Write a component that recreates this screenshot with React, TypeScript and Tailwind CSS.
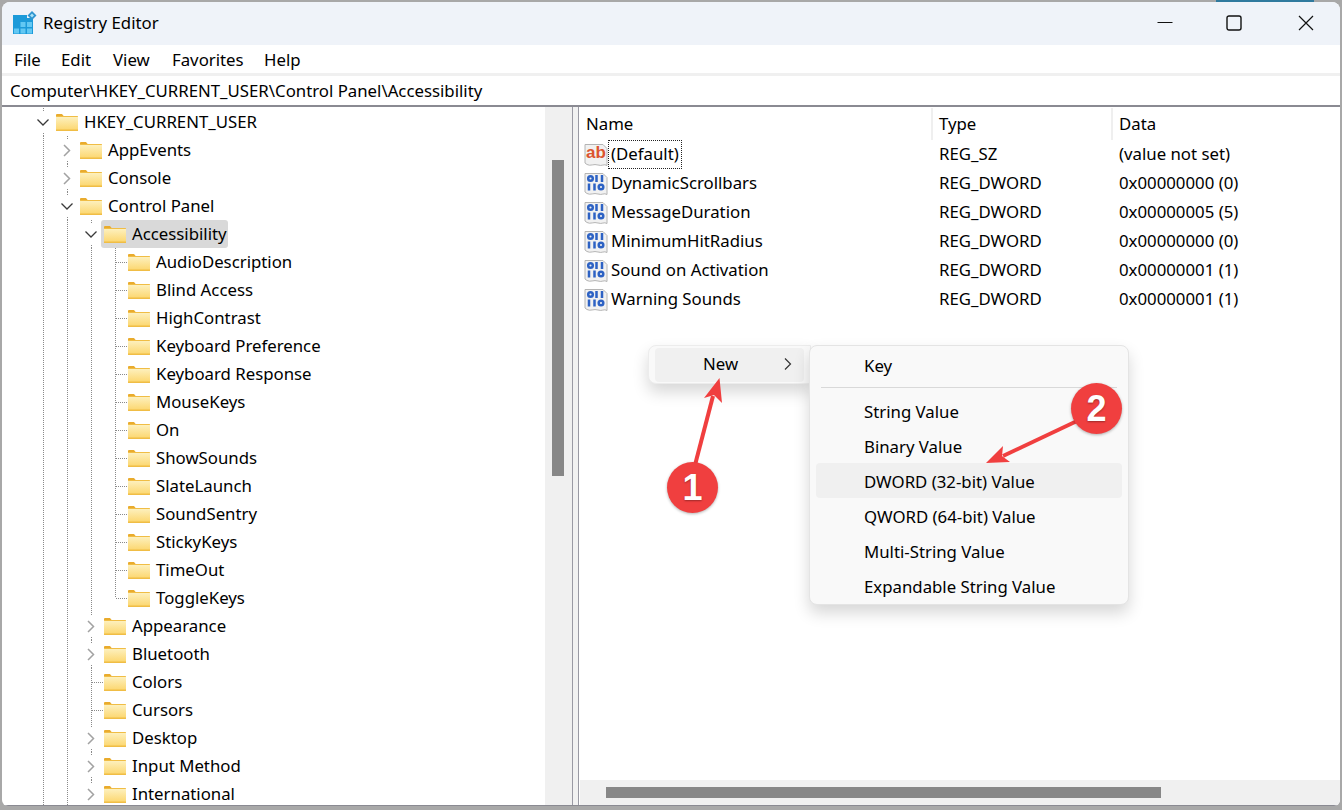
const font = "font-['Noto_Sans','Open_Sans',sans-serif]";

type Guide = "line" | "tee" | "last" | "open" | "closed";

const tree: { label: string; depth: number; kind: Guide; selected?: boolean }[] = [
  { label: "HKEY_CURRENT_USER", depth: 0, kind: "open" },
  { label: "AppEvents", depth: 1, kind: "closed" },
  { label: "Console", depth: 1, kind: "closed" },
  { label: "Control Panel", depth: 1, kind: "open" },
  { label: "Accessibility", depth: 2, kind: "open", selected: true },
  { label: "AudioDescription", depth: 3, kind: "tee" },
  { label: "Blind Access", depth: 3, kind: "tee" },
  { label: "HighContrast", depth: 3, kind: "tee" },
  { label: "Keyboard Preference", depth: 3, kind: "tee" },
  { label: "Keyboard Response", depth: 3, kind: "tee" },
  { label: "MouseKeys", depth: 3, kind: "tee" },
  { label: "On", depth: 3, kind: "tee" },
  { label: "ShowSounds", depth: 3, kind: "tee" },
  { label: "SlateLaunch", depth: 3, kind: "tee" },
  { label: "SoundSentry", depth: 3, kind: "tee" },
  { label: "StickyKeys", depth: 3, kind: "tee" },
  { label: "TimeOut", depth: 3, kind: "tee" },
  { label: "ToggleKeys", depth: 3, kind: "last" },
  { label: "Appearance", depth: 2, kind: "closed" },
  { label: "Bluetooth", depth: 2, kind: "closed" },
  { label: "Colors", depth: 2, kind: "tee" },
  { label: "Cursors", depth: 2, kind: "tee" },
  { label: "Desktop", depth: 2, kind: "closed" },
  { label: "Input Method", depth: 2, kind: "closed" },
  { label: "International", depth: 2, kind: "closed" },
];

const values = [
  { name: "(Default)", type: "REG_SZ", data: "(value not set)", string: true },
  { name: "DynamicScrollbars", type: "REG_DWORD", data: "0x00000000 (0)" },
  { name: "MessageDuration", type: "REG_DWORD", data: "0x00000005 (5)" },
  { name: "MinimumHitRadius", type: "REG_DWORD", data: "0x00000000 (0)" },
  { name: "Sound on Activation", type: "REG_DWORD", data: "0x00000001 (1)" },
  { name: "Warning Sounds", type: "REG_DWORD", data: "0x00000001 (1)" },
];

const submenu = ["String Value", "Binary Value", "DWORD (32-bit) Value", "QWORD (64-bit) Value", "Multi-String Value", "Expandable String Value"];

function GuideCell({ kind }: { kind: Guide }) {
  const dots = { stroke: "#8a8a8a", strokeDasharray: "1 1", shapeRendering: "crispEdges" as const };
  return (
    <svg width="24" height="28" viewBox="0 0 24 28" fill="none" className="shrink-0">
      {kind === "line" && <path d="M12.5 0V28" {...dots} />}
      {kind === "tee" && <path d="M12.5 0V28M13 14.5H24" {...dots} />}
      {kind === "last" && <path d="M12.5 0V14M13 14.5H24" {...dots} />}
      {(kind === "open" || kind === "closed") && <path d="M12.5 0V3M12.5 25V28" {...dots} />}
      {kind === "open" && <path d="M6.5 11.5L12 17L17.5 11.5" stroke="#3a3a3a" strokeWidth="1.3" />}
      {kind === "closed" && <path d="M9 9L14.5 14.5L9 20" stroke="#a2a2a2" strokeWidth="1.5" />}
    </svg>
  );
}

function Folder() {
  return (
    <svg width="22" height="17" viewBox="0 0 22 17" className="shrink-0">
      <path d="M0 1a1 1 0 0 1 1-1h5l2 2.5H0z" fill="#e9ab2d" />
      <rect x="0" y="2" width="22" height="15" rx="0.5" fill="#f0bd45" />
      <rect x="0" y="3" width="22" height="12.5" fill="url(#folderFill)" />
      <defs>
        <linearGradient id="folderFill" x1="0" y1="0" x2="0" y2="1">
          <stop offset="0" stopColor="#fdf0bd" />
          <stop offset="1" stopColor="#fcd873" />
        </linearGradient>
      </defs>
    </svg>
  );
}

function TreeRow({ label, depth, kind, selected }: (typeof tree)[number]) {
  return (
    <div className="flex h-7 shrink-0 items-center">
      {Array.from({ length: depth }).map((_, i) => (
        <GuideCell key={i} kind="line" />
      ))}
      <GuideCell kind={kind} />
      <div className={`ml-[-2px] flex h-7 items-center gap-[6px] rounded-[3px] pl-[3px] pr-[1px] ${selected ? "bg-[#d9d9d9]" : ""}`}>
        <Folder />
        <span className="whitespace-nowrap">{label}</span>
      </div>
    </div>
  );
}

function RegIcon({ string }: { string?: boolean }) {
  return (
    <svg width="24" height="24" viewBox="0 0 24 24" className="shrink-0">
      <path d="M1 1.5H19L23 5.5V22.5C20 20.5 18 23.5 14 22C10 20.5 6 23.5 3 21.5L1 20Z" fill="#f1f1f1" stroke="#b4b4b4" />
      {string ? (
        <text x="2" y="15" fontSize="17" fontWeight="700" fill="#dc5530" fontFamily="Liberation Sans, sans-serif">ab</text>
      ) : (
        <g fill="none" stroke="#2d62c4" strokeWidth="2.5">
          <circle cx="6.5" cy="6.5" r="2.3" />
          <path d="M12.5 3V10M18 3V10M5 11.5V18.5M10.5 11.5V18.5" />
          <circle cx="17" cy="15" r="2.3" />
        </g>
      )}
    </svg>
  );
}

export default function App() {
  return (
    <div className={`relative h-[810px] w-[1342px] overflow-hidden bg-[#a8a8a8] text-[16.8px] leading-none text-black ${font}`}>
      <div className="ml-[1216px] h-[2px] w-[98px] bg-[#2f7a9e]" />
      <div className="ml-[2px] flex h-[804px] w-[1338px] flex-col overflow-hidden rounded-lg rounded-b-[6px] bg-white">
        {/* title bar */}
        <div className="flex h-[43px] shrink-0 items-center bg-[#eff3f9] pl-[11px]">
          <svg width="24" height="26" viewBox="0 0 24 26" className="mb-[2px] shrink-0">
            <path d="M0 5H14V8H20V24H0Z" fill="#1c9ad9" />
            <g fill="#63c8f3">
              <rect x="7.5" y="12" width="5" height="5" />
              <rect x="14" y="12" width="5" height="5" />
              <rect x="1" y="18.5" width="5" height="5" />
              <rect x="7.5" y="18.5" width="5" height="5" />
              <rect x="14" y="18.5" width="5" height="5" />
            </g>
            <path d="M19 1L23.5 5.5L19 10L14.5 5.5Z" fill="#2f94cf" />
            <path d="M19 3.5L21 5.5L19 7.5L17 5.5Z" fill="#a9e3f8" />
          </svg>
          <span className="ml-[6px]">Registry Editor</span>
          <div className="ml-auto flex items-center pb-[2px]">
            <svg width="16" height="16" viewBox="0 0 16 16" className="mr-[53px]"><path d="M0.5 7.5H15.5" stroke="#111" strokeWidth="1.1" /></svg>
            <svg width="16" height="16" viewBox="0 0 16 16" className="mr-[56px]"><rect x="1" y="1" width="14" height="14" rx="2" fill="none" stroke="#111" strokeWidth="1.4" /></svg>
            <svg width="16" height="16" viewBox="0 0 16 16" className="mr-[26px]"><path d="M1 1L15 15M15 1L1 15" stroke="#111" strokeWidth="1.2" /></svg>
          </div>
        </div>

        {/* menu bar */}
        <div className="flex h-7 shrink-0 items-center bg-white pt-[2px]">
          <span className="ml-[12px] w-[47px]">File</span>
          <span className="w-[52px]">Edit</span>
          <span className="w-[59px]">View</span>
          <span className="w-[92px]">Favorites</span>
          <span>Help</span>
        </div>

        {/* address bar */}
        <div className="flex h-[34px] shrink-0 items-center border-t-[3px] border-b-2 border-t-[#f0f0f0] border-b-[#8a8a92] bg-white pl-[8px] pt-[2px]">
          Computer\HKEY_CURRENT_USER\Control Panel\Accessibility
        </div>

        <div className="flex min-h-0 flex-1 border-b border-[#8a8a92]">
          {/* key tree */}
          <div className="flex w-[543px] shrink-0 flex-col overflow-hidden pl-[29px] pt-px">
            {tree.map((row) => (
              <TreeRow key={row.label} {...row} />
            ))}
          </div>
          <div className="flex w-[27px] shrink-0 justify-center bg-[#f0f0f0] pt-[53px] pr-px">
            <div className="h-[316px] w-[12px] bg-[#878787]" />
          </div>
          <div className="w-[7px] shrink-0 border-x border-[#9a9aa4] bg-[#f2f2f2]" />

          {/* value list */}
          <div className="flex min-w-0 flex-1 flex-col">
            <div className="grid h-[33px] shrink-0 grid-cols-[354px_180px_1fr] items-center pt-px">
              <div className="flex h-full items-center border-r-2 border-[#efefef] pl-[7px]">Name</div>
              <div className="flex h-full items-center border-r-2 border-[#efefef] pl-[6px]">Type</div>
              <div className="pl-[6px]">Data</div>
            </div>
            {values.map((v, i) => (
              <div key={v.name} className="grid h-[29px] shrink-0 grid-cols-[354px_180px_1fr] items-center">
                <div className="flex items-center pl-[5px]">
                  <RegIcon string={v.string} />
                  <span className={`flex h-[29px] items-center px-[2px] ${i === 0 ? "border border-dotted border-[#222]" : "border border-transparent"}`}>{v.name}</span>
                </div>
                <div className="pl-[6px]">{v.type}</div>
                <div className="pl-[6px]">{v.data}</div>
              </div>
            ))}
            <div className="mt-auto ml-px flex h-[25px] shrink-0 items-center bg-[#f0f0f0] pl-[26px]">
              <div className="h-[11px] w-[555px] bg-[#878787]" />
            </div>
          </div>
        </div>
      </div>

      {/* context menu */}
      <div className="absolute left-[648px] top-[345px] flex h-[39px] w-[163px] items-center rounded-l-lg border border-[#ececec] bg-[#f9f9f9] p-[2px_6px] shadow-[0_8px_16px_rgba(0,0,0,0.16)]">
        <div className="flex h-[34px] w-[151px] items-center rounded bg-[#f0f0f0] pl-[48px]">
          <span>New</span>
          <svg width="10" height="14" viewBox="0 0 10 14" className="mb-[2px] ml-[45px]"><path d="M2 1.5L7.5 7L2 12.5" fill="none" stroke="#333" strokeWidth="1.2" /></svg>
        </div>
      </div>

      <div className="absolute left-[809px] top-[345px] flex h-[260px] w-[320px] flex-col rounded-lg border border-[#e4e4e4] bg-[#f9f9f9] px-[6px] pt-px shadow-[0_8px_16px_rgba(0,0,0,0.16)]">
        <div className="flex h-[38px] shrink-0 items-center pl-[48px]">Key</div>
        <div className="mx-[5px] mb-[5px] mt-[2px] h-px shrink-0 bg-[#d9d9d9]" />
        {submenu.map((label) => (
          <div key={label} className={`flex h-[35px] shrink-0 items-center rounded pl-[48px] pt-[4px] ${label.startsWith("DWORD") ? "bg-[#f0f0f0]" : ""}`}>
            {label}
          </div>
        ))}
      </div>

      {/* annotations */}
      <svg width="1342" height="810" viewBox="0 0 1342 810" className="pointer-events-none absolute left-0 top-0">
        <path d="M695 465L713 396" stroke="#f03f3f" strokeWidth="4" />
        <path d="M719.5 378L722 403L714 395L704 398Z" fill="#f03f3f" />
        <path d="M1077 421L1003 456" stroke="#f03f3f" strokeWidth="4" />
        <path d="M986 463L1003 446L1002 456L1010 462Z" fill="#f03f3f" />
      </svg>
      <div className="absolute left-[667px] top-[462px] flex h-[51px] w-[51px] items-center justify-center rounded-full bg-[#f03f3f] font-['Liberation_Sans',sans-serif] text-[36px] font-bold text-white shadow-[0_1px_3px_rgba(0,0,0,0.3)] [text-shadow:0_1px_2px_rgba(0,0,0,0.35)]">1</div>
      <div className="absolute left-[1071px] top-[383px] flex h-[51px] w-[51px] items-center justify-center rounded-full bg-[#f03f3f] font-['Liberation_Sans',sans-serif] text-[36px] font-bold text-white shadow-[0_1px_3px_rgba(0,0,0,0.3)] [text-shadow:0_1px_2px_rgba(0,0,0,0.35)]">2</div>
    </div>
  );
}
